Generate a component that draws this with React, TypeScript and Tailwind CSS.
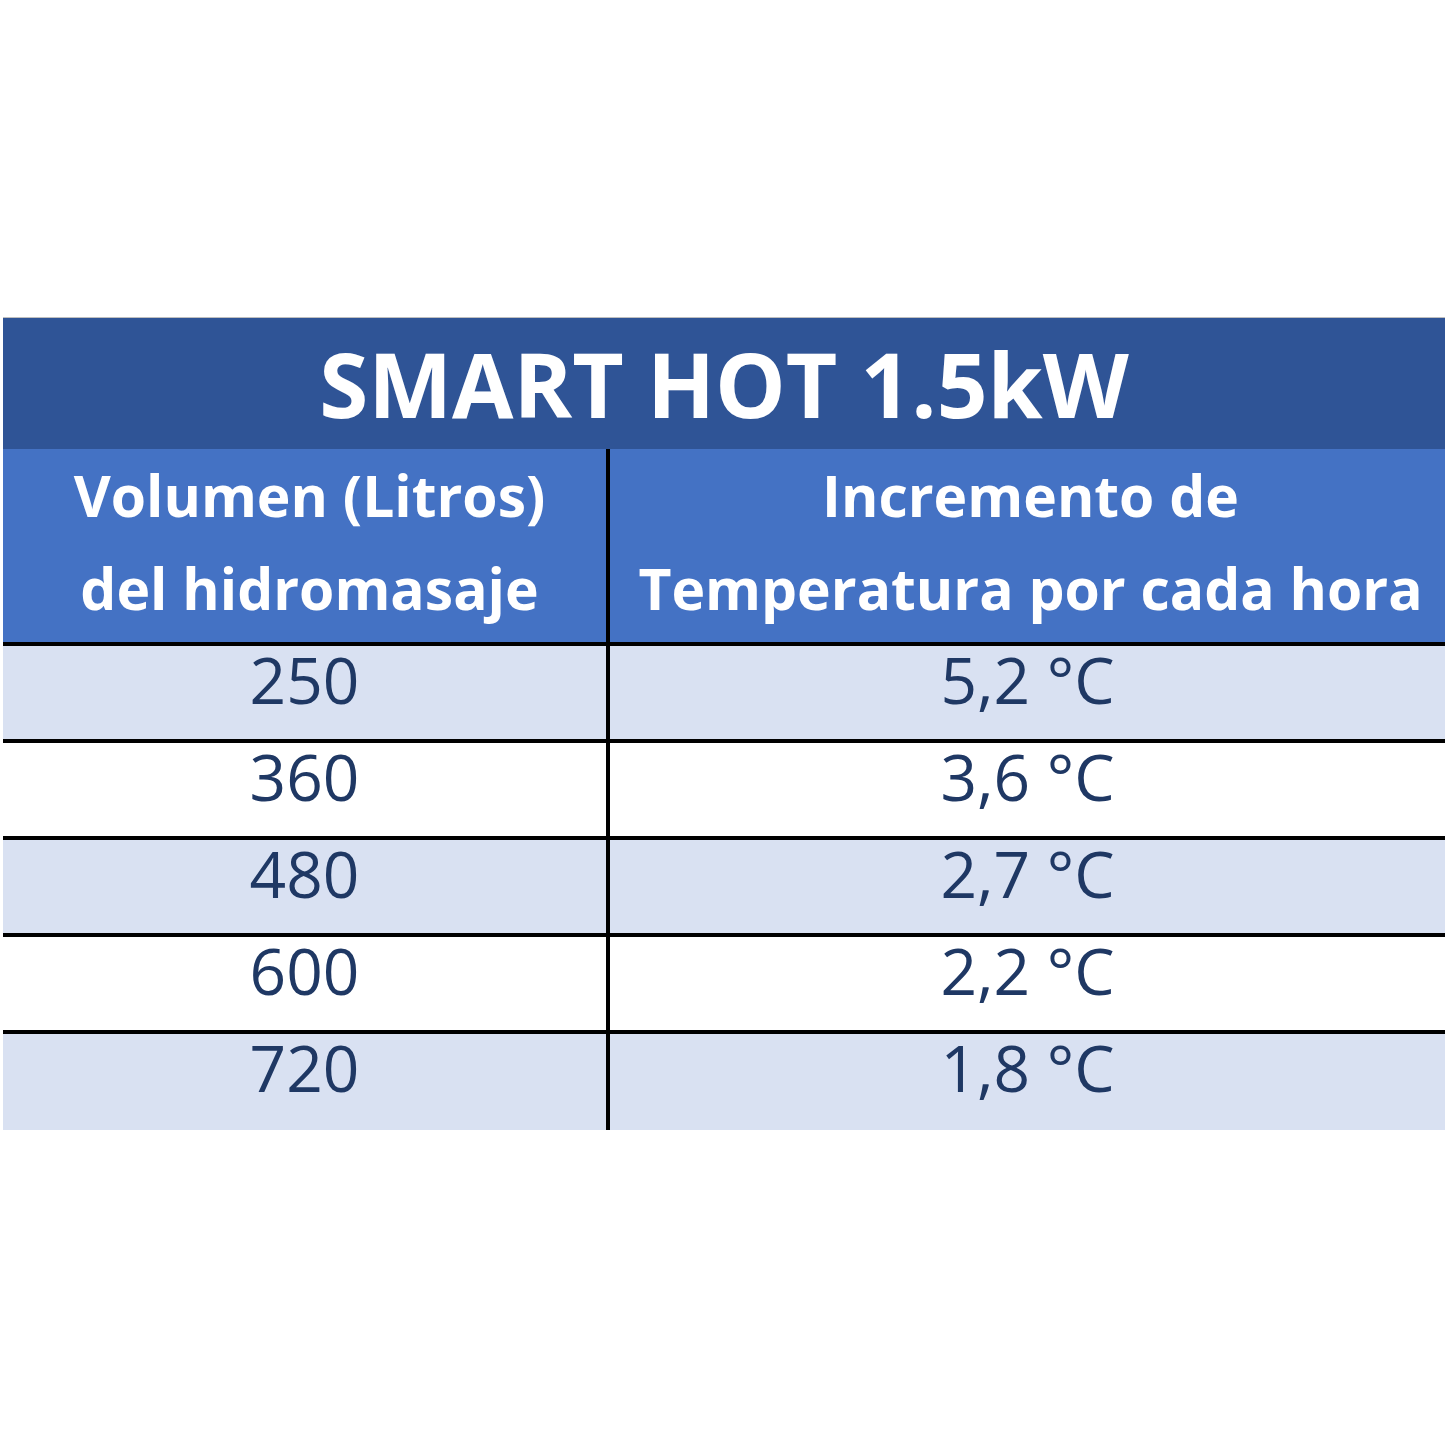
const rows = [
  ["250", "5,2 °C"],
  ["360", "3,6 °C"],
  ["480", "2,7 °C"],
  ["600", "2,2 °C"],
  ["720", "1,8 °C"],
];

export default function App() {
  return (
    <div className="h-[1445px] w-[1445px] bg-white pt-[317px] pl-[3px] font-['Open_Sans',sans-serif]">
      <div className="border-t border-[#bfbfbf]">
        {/* title band */}
        <div className="flex h-[131px] items-center justify-center bg-[#2f5496] text-[89px] font-bold leading-none text-white">
          SMART HOT 1.5kW
        </div>

        {/* header */}
        <div className="grid h-[197px] grid-cols-[607px_1fr] border-b-4 border-black bg-[#4472c4] text-[57px] font-bold leading-[93px] text-white">
          <div className="flex flex-col items-center border-r-4 border-black pl-[10px]">
            <span>Volumen (Litros)</span>
            <span>del hidromasaje</span>
          </div>
          <div className="flex flex-col items-center pl-[6px]">
            <span>Incremento de</span>
            <span>Temperatura por cada hora</span>
          </div>
        </div>

        {rows.map(([vol, temp], i) => (
          <div
            key={vol}
            className={`grid grid-cols-[607px_1fr] text-[64px] leading-none text-[#1f3864] ${
              i % 2 === 0 ? "bg-[#d9e1f2]" : "bg-white"
            } ${i < rows.length - 1 ? "h-[97px] border-b-4 border-black" : "h-[96px]"}`}
          >
            <div className="flex justify-center border-r-4 border-black pt-[2px]">{vol}</div>
            <div className="flex justify-center pt-[2px]">{temp}</div>
          </div>
        ))}
      </div>
    </div>
  );
}
